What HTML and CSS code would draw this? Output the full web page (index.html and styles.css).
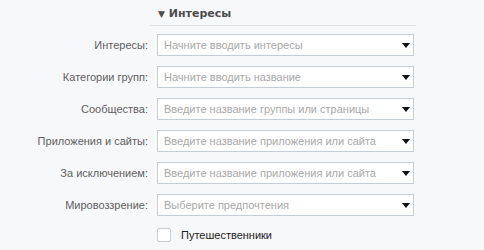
FILE: index.html
```html
<!DOCTYPE html>
<html lang="ru">
<head>
    <meta charset="UTF-8">
    <title>Интересы</title>
    <link rel="stylesheet" href="styles.css">
</head>
<body>
<div class="panel">
    <div class="head"><span class="arrow">▼</span> Интересы</div>

    <div class="rows">
        <label class="name">Интересы:</label>
        <div class="pick"><span>Начните вводить интересы</span><i></i></div>

        <label class="name">Категории групп:</label>
        <div class="pick"><span>Начните вводить название</span><i></i></div>

        <label class="name">Сообщества:</label>
        <div class="pick"><span>Введите название группы или страницы</span><i></i></div>

        <label class="name">Приложения и сайты:</label>
        <div class="pick"><span>Введите название приложения или сайта</span><i></i></div>

        <label class="name">За исключением:</label>
        <div class="pick"><span>Введите название приложения или сайта</span><i></i></div>

        <label class="name">Мировоззрение:</label>
        <div class="pick"><span>Выберите предпочтения</span><i></i></div>

        <div></div>
        <label class="check"><span class="box"></span>Путешественники</label>
    </div>
</div>
</body>
</html>
```

FILE: styles.css
```css
body{
    margin: 0;
    background-color: #f7f8fa;
    font-family: "Liberation Sans", Arial, sans-serif;
    font-size: 11px;
    color: #555;
}
.panel{
    width: 416px;
    padding-top: 7px;
}
.head{
    margin-left: 150px;
    padding: 0 0 5px 8px;
    border-bottom: 1px solid #dde1e6;
    font-family: "DejaVu Sans", sans-serif;
    font-size: 11px;
    font-weight: bold;
    color: #4d4d4d;
    height: 13px;
    line-height: 13px;
}
.arrow{
    font-size: 9px;
}
.rows{
    display: grid;
    grid-template-columns: 148px 257px;
    column-gap: 9px;
    row-gap: 10px;
    margin-top: 8px;
    align-items: center;
}
.name{
    text-align: right;
    color: #5f5f5f;
    white-space: nowrap;
}
.pick{
    box-sizing: border-box;
    height: 22px;
    border: 1px solid #c5ccd4;
    background-color: white;
    display: flex;
    align-items: center;
    justify-content: space-between;
    padding: 0 3px 0 6px;
    color: #a8a8a8;
    white-space: nowrap;
}
.pick i{
    width: 0;
    height: 0;
    border-left: 4px solid transparent;
    border-right: 4px solid transparent;
    border-top: 5px solid #111;
}
.check{
    display: flex;
    align-items: center;
    color: #222;
    margin-top: 2px;
}
.box{
    width: 12px;
    height: 12px;
    border: 1px solid #c5ccd4;
    background-color: white;
    border-radius: 2px;
    margin-right: 10px;
}
```
